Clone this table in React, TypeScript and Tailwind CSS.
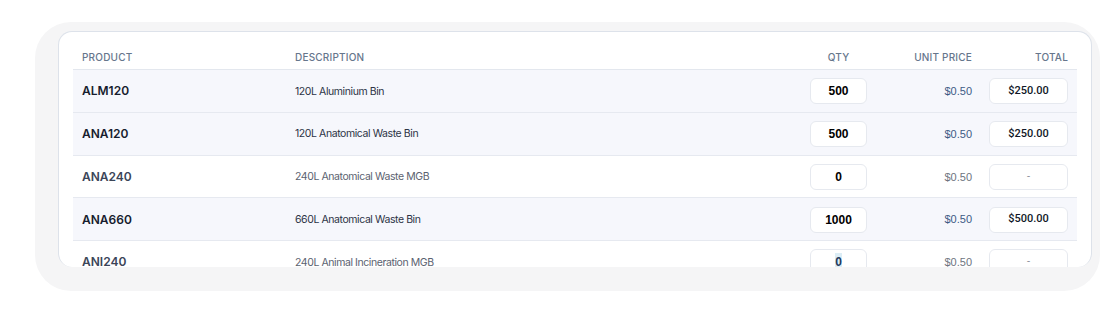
const rows = [
  { code: 'ALM120', desc: '120L Aluminium Bin', qty: '500', total: '$250.00', active: true },
  { code: 'ANA120', desc: '120L Anatomical Waste Bin', qty: '500', total: '$250.00', active: true },
  { code: 'ANA240', desc: '240L Anatomical Waste MGB', qty: '0', total: '-', active: false },
  { code: 'ANA660', desc: '660L Anatomical Waste Bin', qty: '1000', total: '$500.00', active: true },
  { code: 'ANI240', desc: '240L Animal Incineration MGB', qty: '0', total: '-', active: false, focus: true },
];

const grid = 'grid grid-cols-[213px_515px_57px_122px_79px] px-[9px] items-center';

export default function App() {
  return (
    <div className="w-[1115px] h-[319px] bg-white font-['Inter',sans-serif]">
      <div className="ml-[35px] pt-[22px]">
        <div className="w-[1065px] h-[269px] rounded-[36px] bg-[#f5f5f6] pl-[23px] pt-[9px] pr-[8px] pb-[24px]">
          <div className="h-full bg-white border-x border-t border-[#dde2ea] rounded-[14px] overflow-hidden px-[14px] pt-[13px]">
            {/* header */}
            <div className={`${grid} h-[25px] border-b border-[#e3e7ee] text-[10px] font-medium uppercase text-[#66768c] tracking-[0.02em]`}>
              <div>Product</div>
              <div>Description</div>
              <div className="text-center">Qty</div>
              <div className="text-right pr-[17px]">Unit Price</div>
              <div className="text-right">Total</div>
            </div>

            {rows.map((r) => (
              <div
                key={r.code}
                className={`${grid} h-[42.75px] pt-[1px] border-b border-[#e6e9f0] ${r.active ? 'bg-[#f6f7fc]' : 'bg-white'}`}
              >
                <div className={`text-[12px] font-semibold ${r.active ? 'text-[#161d2e]' : 'text-[#3b4558]'}`}>{r.code}</div>
                <div className={`text-[10.5px] tracking-[-0.04em] ${r.active ? 'text-[#2c3345]' : 'text-[#5b6270]'}`}>{r.desc}</div>
                <div className="h-[26px] rounded-[6px] border border-[#e6e9ef] bg-white flex items-center justify-center font-['Liberation_Sans',Arial,sans-serif] text-[12px] font-bold text-black">
                  {r.focus ? <span className="bg-[#dcedf5] text-[#1d3a5c]">{r.qty}</span> : r.qty}
                </div>
                <div className={`text-right pr-[17px] font-['Liberation_Sans',Arial,sans-serif] text-[11px] ${r.active ? 'text-[#3d5a85]' : 'text-[#6e7480]'}`}>$0.50</div>
                <div className={`h-[26px] rounded-[6px] border border-[#e6e9ef] bg-white flex items-center justify-center font-['Roboto',sans-serif] text-[11px] ${r.total === '-' ? 'text-[#8a8f99]' : 'font-medium text-[#111827]'}`}>
                  {r.total}
                </div>
              </div>
            ))}
          </div>
        </div>
      </div>
    </div>
  );
}
